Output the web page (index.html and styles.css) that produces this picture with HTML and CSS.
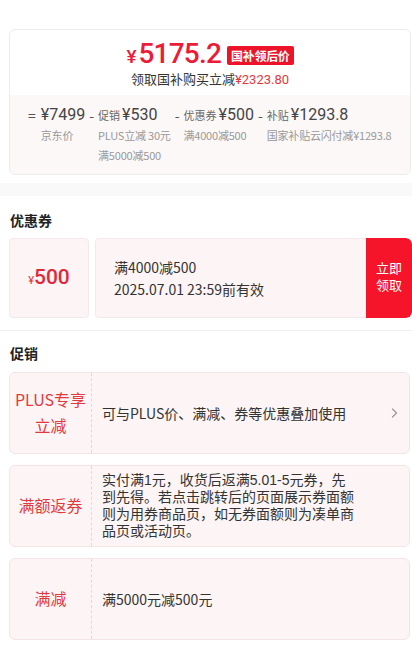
FILE: index.html
```html
<!DOCTYPE html>
<html lang="zh-CN">
<head>
<meta charset="utf-8">
<title>价格明细</title>
<link rel="stylesheet" href="styles.css">
</head>
<body>
<div class="top">
  <div class="price-card">
    <div class="price-main">
      <div class="price-row">
        <span class="yen">¥</span><span class="price-num">5175.2</span><span class="badge">国补领后价</span>
      </div>
      <div class="price-sub">领取国补购买立减<span class="red-amt">¥2323.80</span></div>
    </div>
    <div class="breakdown">
      <div class="bd-col">
        <span class="op op-eq">=</span>
        <div class="bd-body">
          <div class="bd-line"><span class="bd-amt">¥7499</span></div>
          <div class="bd-note">京东价</div>
        </div>
      </div>
      <div class="bd-col">
        <span class="op">-</span>
        <div class="bd-body">
          <div class="bd-line"><span class="bd-label">促销</span><span class="bd-amt">¥530</span></div>
          <div class="bd-note">PLUS立减 30元</div>
          <div class="bd-note">满5000减500</div>
        </div>
      </div>
      <div class="bd-col">
        <span class="op">-</span>
        <div class="bd-body">
          <div class="bd-line"><span class="bd-label">优惠券</span><span class="bd-amt">¥500</span></div>
          <div class="bd-note">满4000减500</div>
        </div>
      </div>
      <div class="bd-col">
        <span class="op">-</span>
        <div class="bd-body">
          <div class="bd-line"><span class="bd-label">补贴</span><span class="bd-amt">¥1293.8</span></div>
          <div class="bd-note">国家补贴云闪付减¥1293.8</div>
        </div>
      </div>
    </div>
  </div>
</div>

<div class="band"></div>

<section class="section coupon-section">
  <h2 class="sec-title">优惠券</h2>
  <div class="coupon">
    <div class="coupon-value"><span class="cv-yen">¥</span><span class="cv-num">500</span></div>
    <div class="coupon-main">
      <div class="coupon-info">
        <div class="ci-line">满4000减500</div>
        <div class="ci-line">2025.07.01 23:59前有效</div>
      </div>
      <div class="coupon-btn">立即<br>领取</div>
    </div>
  </div>
</section>

<div class="divider"></div>

<section class="section promo-section">
  <h2 class="sec-title">促销</h2>
  <div class="promo-list">
    <div class="promo">
      <div class="promo-tag">PLUS专享<br>立减</div>
      <div class="promo-text">可与PLUS价、满减、券等优惠叠加使用</div>
      <svg class="promo-arrow" width="7" height="10" viewBox="0 0 7 10"><path d="M1.5 1 L5.5 5 L1.5 9" fill="none" stroke="#a8979c" stroke-width="1.4" stroke-linecap="round" stroke-linejoin="round"/></svg>
    </div>
    <div class="promo">
      <div class="promo-tag">满额返券</div>
      <div class="promo-text promo-multi">实付满1元，收货后返满5.01-5元券，先<br>到先得。若点击跳转后的页面展示券面额<br>则为用券商品页，如无券面额则为凑单商<br>品页或活动页。</div>
    </div>
    <div class="promo">
      <div class="promo-tag">满减</div>
      <div class="promo-text">满5000元减500元</div>
    </div>
  </div>
</section>
</body>
</html>
```

FILE: styles.css
```css
* { box-sizing: border-box; }

body {
  margin: 0;
  background: #ffffff;
  font-family: "Noto Sans CJK SC", "Noto Sans", sans-serif;
  color: #333333;
}

.top {
  padding: 29px 1px 0 9px;
}

.price-card {
  border: 1px solid #ececec;
  border-radius: 6px;
  overflow: hidden;
}

.price-main {
  padding: 9px 0 5px;
  display: flex;
  flex-direction: column;
  align-items: center;
}

.price-row {
  display: flex;
  align-items: center;
  height: 30px;
  color: #ec1c38;
}

.yen {
  font-family: Roboto, "Noto Sans", sans-serif;
  font-size: 19px;
  font-weight: 500;
  margin-top: 5px;
  margin-right: 2px;
}

.price-num {
  font-family: Roboto, "Noto Sans", sans-serif;
  font-size: 28px;
  font-weight: 500;
  letter-spacing: -0.8px;
  line-height: 30px;
}

.badge {
  margin-left: 6px;
  margin-top: 3px;
  background: #ec1428;
  color: #ffffff;
  font-size: 12px;
  font-weight: 700;
  line-height: 19px;
  padding: 0 4px;
  border-radius: 2px;
  letter-spacing: -0.3px;
}

.price-sub {
  font-size: 13px;
  line-height: 20px;
  color: #333333;
}

.red-amt {
  color: #e4393c;
  font-family: Roboto, "Noto Sans", sans-serif;
}

.breakdown {
  background: #fdf8f8;
  padding: 10px 0 9px 18px;
  display: flex;
  gap: 4px;
  align-items: flex-start;
}

.bd-col {
  display: flex;
  align-items: flex-start;
}

.op {
  font-size: 14px;
  line-height: 20px;
  color: #555555;
  margin-right: 4px;
}

.op-eq {
  margin-right: 5px;
}

.bd-line {
  display: flex;
  align-items: baseline;
  gap: 2px;
  line-height: 20px;
  white-space: nowrap;
}

.bd-label {
  font-size: 11px;
  color: #666666;
}

.bd-amt {
  font-family: Roboto, "Noto Sans", sans-serif;
  font-size: 16px;
  color: #444444;
}

.bd-note {
  font-size: 11px;
  line-height: 20px;
  color: #999999;
  white-space: nowrap;
  letter-spacing: -0.2px;
}

.band {
  margin-top: 8px;
  height: 13px;
  background: #f9f9f9;
}

.section {
  padding: 0 0 0 9px;
}

.sec-title {
  margin: 0;
  padding-left: 1px;
  font-size: 14px;
  font-weight: 700;
  line-height: 20px;
  color: #222222;
}

.coupon-section .sec-title {
  padding-top: 14px;
  margin-bottom: 8px;
}

.coupon {
  display: flex;
  gap: 6px;
  height: 80px;
}

.coupon-value {
  width: 80px;
  background: #fdf5f5;
  border: 1px solid #f6e9e9;
  border-radius: 4px;
  display: flex;
  align-items: baseline;
  justify-content: center;
  padding-top: 26px;
  color: #e0283a;
}

.cv-yen {
  font-size: 11px;
  font-family: Roboto, "Noto Sans", sans-serif;
}

.cv-num {
  font-family: Roboto, "Noto Sans", sans-serif;
  font-size: 21px;
  font-weight: 500;
  line-height: 24px;
}

.coupon-main {
  flex: 1;
  display: flex;
  background: #fdf5f5;
  border-radius: 4px 6px 6px 4px;
  overflow: hidden;
}

.coupon-info {
  flex: 1;
  border: 1px solid #f6e9e9;
  border-right: none;
  border-radius: 4px 0 0 4px;
  padding: 17px 0 0 18px;
}

.ci-line {
  font-size: 14px;
  line-height: 22px;
  color: #333333;
}

.coupon-btn {
  width: 46px;
  background: #f6142a;
  color: #ffffff;
  font-family: "Liberation Sans", "Noto Sans CJK SC", sans-serif;
  font-size: 13px;
  line-height: 17px;
  display: flex;
  align-items: center;
  justify-content: center;
  text-align: center;
  border-radius: 0 6px 6px 0;
  padding-bottom: 2px;
}

.divider {
  margin-top: 12px;
  height: 1px;
  background: #efefef;
}

.promo-section .sec-title {
  padding-top: 12px;
  margin-bottom: 9px;
}

.section.promo-section {
  padding-right: 2px;
}

.promo-list {
  display: flex;
  flex-direction: column;
  gap: 11px;
}

.promo {
  display: flex;
  align-items: stretch;
  min-height: 82px;
  background: #fdf5f5;
  border: 1px solid #f3e4e6;
  border-radius: 6px;
}

.promo-tag {
  width: 82px;
  flex: none;
  border-right: 1px dashed #e6d6d8;
  display: flex;
  align-items: center;
  justify-content: center;
  text-align: center;
  font-size: 16px;
  line-height: 26px;
  color: #e4393c;
  padding-bottom: 2px;
}

.promo-text {
  flex: 1;
  display: flex;
  align-items: center;
  padding-left: 10px;
  font-size: 14px;
  line-height: 20px;
  color: #333333;
}

.promo-multi {
  display: block;
  font-family: "Liberation Sans", "Noto Sans CJK SC", sans-serif;
  line-height: 17px;
  padding-top: 6px;
  padding-bottom: 6px;
}

.promo-arrow {
  align-self: center;
  margin-right: 11px;
}
```
